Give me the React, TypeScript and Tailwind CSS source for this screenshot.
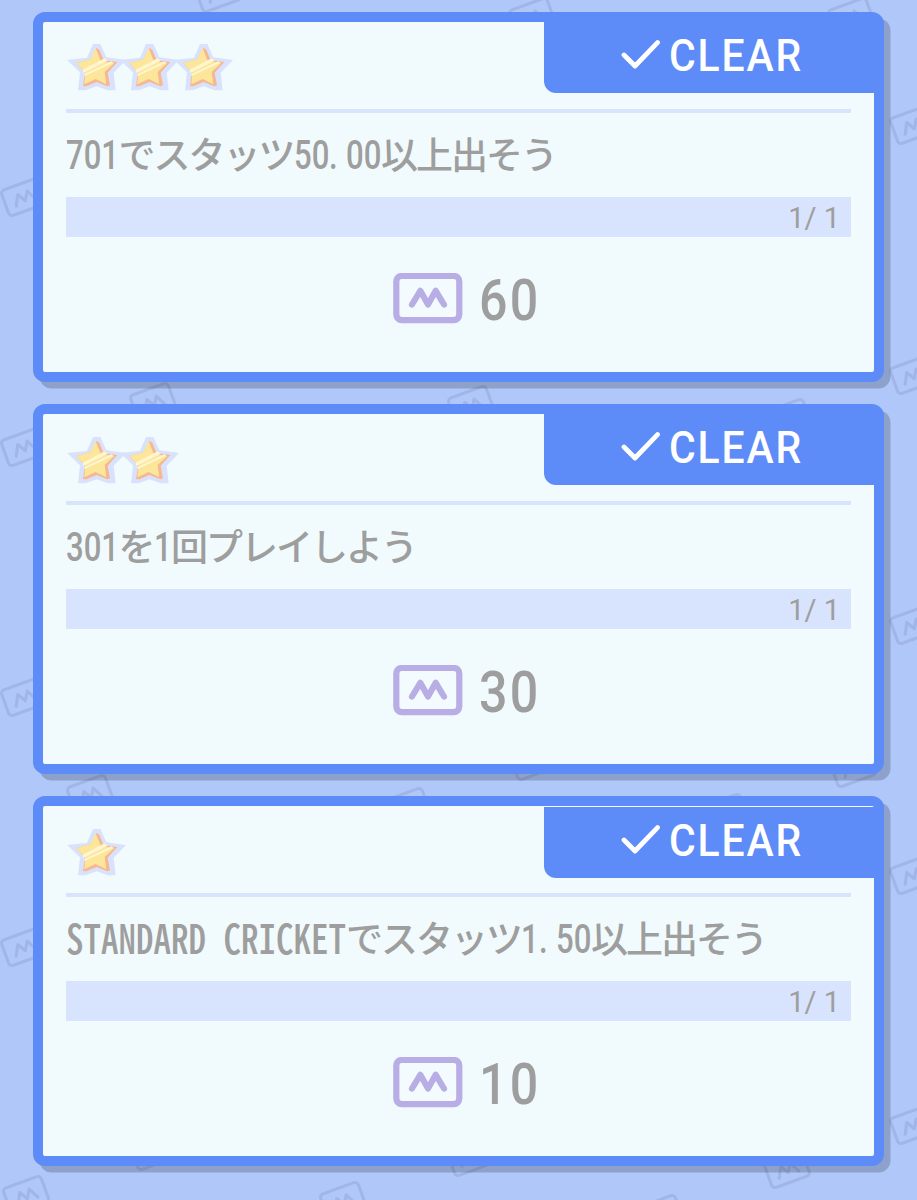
import React from "react";

type Mission = {
  stars: number;
  title: string;
  progress: string;
  reward: number;
  seam: boolean;
};

const missions: Mission[] = [
  { stars: 3, title: "701でスタッツ50.00以上出そう", progress: "1/ 1", reward: 60, seam: false },
  { stars: 2, title: "301を1回プレイしよう", progress: "1/ 1", reward: 30, seam: false },
  { stars: 1, title: "STANDARD CRICKETでスタッツ1.50以上出そう", progress: "1/ 1", reward: 10, seam: true },
];

const stamps: [number, number][] = [
  [218, -7], [532, 17], [851, 17],
  [24, 197], [24, 447], [24, 697], [24, 947],
  [913, 125], [913, 375], [913, 625], [913, 875], [913, 1125],
  [153, 402], [471, 405], [788, 418],
  [90, 794], [407, 807], [725, 813], [533, 761], [853, 768],
  [153, 1151], [470, 1157], [787, 1169],
  [26, 1195], [343, 1201], [660, 1214],
];

function Backdrop() {
  return (
    <svg className="absolute inset-0" width="917" height="1200" viewBox="0 0 917 1200" fill="none">
      <g stroke="#a1b5e6" strokeWidth="3" strokeLinecap="round" strokeLinejoin="round">
        {stamps.map(([x, y]) => (
          <g key={`${x}-${y}`} transform={`translate(${x} ${y}) rotate(-20)`}>
            <rect x="-20" y="-13.5" width="40" height="27" rx="3.5" />
            <path d="M-10.5 6 L-5 -4.5 L0 4 L5 -4.5 L10.5 6" />
          </g>
        ))}
      </g>
    </svg>
  );
}

function Star() {
  return (
    <svg className="-mr-[6.6px] h-[46.7px] w-[60px] shrink-0" viewBox="0 0 180 140">
      <path
        d="M78 0H100L118 40L177 48L140 86L146 139H122L89 127L56 139H33L39 85L0 48L60 41Z"
        fill="#d9e2fc"
      />
      <path d="M88 12L97 17L110 49L151 54L122 86L129 124L121 127L89 114L58 127L48 127L54 86L28 57L70 46Z" fill="#f7b793" />
      <path d="M86 12L101 51L142 57L113 84L118 121L86 105L52 121L55 86L28 57L70 46Z" fill="#fce69a" />
      <path d="M47 77L113 43L122 50L49 87Z" fill="#fff6cf" />
      <path d="M51 91L133 52L139 56L53 96Z" fill="#fff6cf" />
    </svg>
  );
}

function Coin() {
  return (
    <svg className="h-[51px] w-[70px]" viewBox="0 0 70 51" fill="none" stroke="#b8ade5" strokeWidth="6.2" strokeLinecap="round" strokeLinejoin="round">
      <rect x="3.3" y="2.9" width="63" height="44.2" rx="5.5" fill="#f3fbfe" />
      <path d="M19 31.5L27.3 17.8L35 31.5L42.7 17.8L51 31.5" />
    </svg>
  );
}

/* Latin runs sit on a half-width grid: each glyph takes half of a kana cell. */
const CELL = 17.5;

function Title({ text }: { text: string }) {
  const runs = text.match(/[0-9]+|\.|[A-Z ]+|[^\x20-\x7e]+/g) ?? [];
  return (
    <div className="flex h-[52px] items-center whitespace-pre text-[#9e9e9e]">
      {runs.map((run, i) => {
        if (/^[0-9.]/.test(run)) {
          return (
            <span key={i} className="block h-[52px] shrink-0" style={{ width: run.length * CELL }}>
              <span className="block w-max origin-left scale-x-[0.777] font-['Roboto',sans-serif] text-[40px] leading-[55px] font-medium">{run}</span>
            </span>
          );
        }
        if (/^[A-Z]/.test(run)) {
          return (
            <span key={i} className="block h-[52px] shrink-0" style={{ width: run.length * CELL }}>
              <span className="block w-max origin-left scale-x-[0.875] font-['Noto_Sans_CJK_JP',sans-serif] text-[40px] leading-[50px] font-medium [font-feature-settings:'hwid']">{run}</span>
            </span>
          );
        }
        return (
          <span key={i} className="block h-[52px] shrink-0" style={{ width: run.length * CELL * 2 }}>
            <span className="block w-max font-['Noto_Sans_CJK_JP',sans-serif] text-[37px] leading-[51px] font-medium tracking-[-2px]">{run}</span>
          </span>
        );
      })}
    </div>
  );
}

function Card({ mission }: { mission: Mission }) {
  return (
    <section className="relative h-[370px] w-[851px] rounded-[12px] border-[10px] border-[#5d8bf8] bg-[#f1fbfd] px-[23px] shadow-[6.5px_6.5px_0_rgba(0,0,0,0.19)]">
      <div className="flex h-[91px] items-start justify-between border-b-4 border-[#d8e3fc]">
        <div className={mission.stars === 3 ? "flex pt-[22px] pl-[1px]" : "flex pt-[23px] pl-[1px]"}>
          {Array.from({ length: mission.stars }, (_, i) => (
            <Star key={i} />
          ))}
        </div>
        <div
          className={
            mission.seam
              ? "mt-px -mr-[23px] flex h-[71px] w-[330px] items-start rounded-bl-[12px] bg-[#5d8bf8] pt-[17px] pl-[77px] text-white"
              : "-mr-[23px] flex h-[71px] w-[330px] items-start rounded-bl-[12px] bg-[#5d8bf8] pt-[17px] pl-[77px] text-white"
          }
        >
          <svg className="h-[30px] w-[40px]" viewBox="0 0 40 30" fill="none" stroke="currentColor" strokeWidth="4.8" strokeLinecap="round" strokeLinejoin="round">
            <path d="M3 16L14 27L36.5 3.6" />
          </svg>
          <span className="-mt-[13px] ml-[8px] origin-left scale-x-[0.93] font-['Roboto',sans-serif] text-[44px] leading-[60px] font-medium tracking-[2px]">CLEAR</span>
        </div>
      </div>
      <div className="pt-[15px]">
        <Title text={mission.title} />
      </div>
      <div className="mt-[17px] flex h-[40px] items-center justify-end bg-[#d8e3fd] pr-[11px]">
        <span className="whitespace-pre pt-[2px] font-['Roboto',sans-serif] text-[29px] leading-[36px] text-[#9e9e9e]">{mission.progress}</span>
      </div>
      <div className="mt-[36px] flex h-[51px] items-center pl-[327px]">
        <Coin />
        <span className="ml-[16px] origin-left scale-x-[0.88] pt-[5px] font-['Roboto',sans-serif] text-[57px] leading-[60px] font-medium tracking-[2.5px] text-[#9e9e9e]">{mission.reward}</span>
      </div>
    </section>
  );
}

export default function App() {
  return (
    <main className="relative h-[1200px] w-[917px] overflow-hidden bg-[#afc7f9]">
      <Backdrop />
      <div className="relative flex flex-col gap-[22px] pt-[12px] pl-[33px]">
        {missions.map((mission) => (
          <Card key={mission.title} mission={mission} />
        ))}
      </div>
    </main>
  );
}
